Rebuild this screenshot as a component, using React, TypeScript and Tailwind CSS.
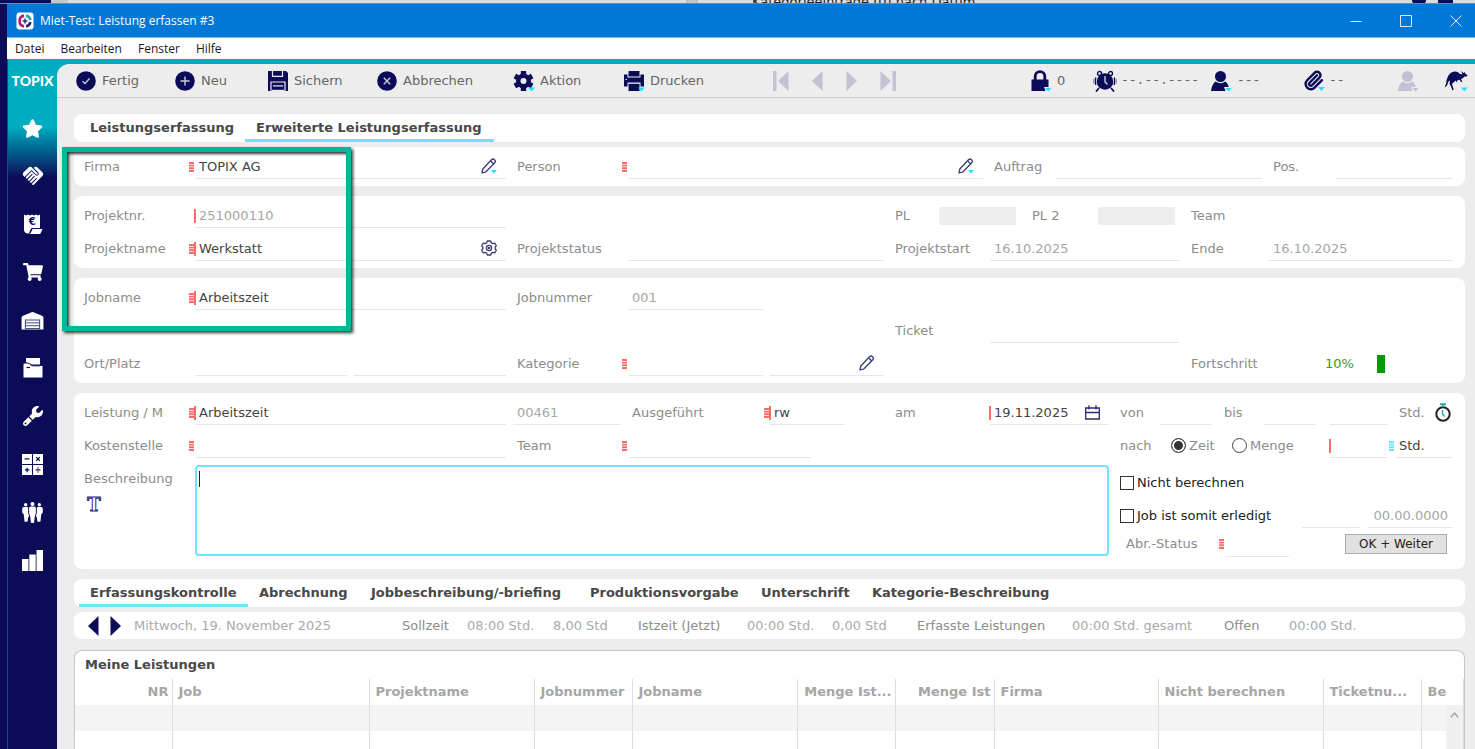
import type { ReactNode } from 'react';
import { Paperclip } from 'lucide-react';
import { FaShoppingCart, FaStar, FaWrench } from 'react-icons/fa';
import { MdHandshake } from 'react-icons/md';

/* ─── Types ─────────────────────────────────────────────────────────────── */

type Mark = 'list' | 'required' | 'both' | 'listCyan';

interface Tab {
  title: string;
  width: string;
}

interface Column {
  title: string;
  width: string;
  right?: boolean;
}

/* ─── Data ──────────────────────────────────────────────────────────────── */

const MENUS = ['Datei', 'Bearbeiten', 'Fenster', 'Hilfe'];

const MAIN_TABS: Tab[] = [
  { title: 'Leistungserfassung',            width: 'w-[166px]' },
  { title: 'Erweiterte Leistungserfassung', width: 'w-[249px]' },
];

const DETAIL_TABS: Tab[] = [
  { title: 'Erfassungskontrolle',       width: 'w-[169px]' },
  { title: 'Abrechnung',                width: 'w-[112px]' },
  { title: 'Jobbeschreibung/-briefing', width: 'w-[219px]' },
  { title: 'Produktionsvorgabe',        width: 'w-[171px]' },
  { title: 'Unterschrift',              width: 'w-[111px]' },
  { title: 'Kategorie-Beschreibung',    width: 'w-[200px]' },
];

const COLUMNS: Column[] = [
  { title: 'NR',              width: 'w-[97px]', right: true },
  { title: 'Job',             width: 'w-[197px]' },
  { title: 'Projektname',     width: 'w-[165px]' },
  { title: 'Jobnummer',       width: 'w-[98px]' },
  { title: 'Jobname',         width: 'w-[165px]' },
  { title: 'Menge Ist...',    width: 'w-[98px]', right: true },
  { title: 'Menge Ist',       width: 'w-[99px]', right: true },
  { title: 'Firma',           width: 'w-[164px]' },
  { title: 'Nicht berechnen', width: 'w-[165px]' },
  { title: 'Ticketnu...',     width: 'w-[98px]' },
  { title: 'Be',              width: 'w-auto' },
];

const SUMMARY = [
  { text: 'Mittwoch, 19. November 2025', style: 'w-[268px] text-[#aaaaaa]' },
  { text: 'Sollzeit',                    style: 'w-[65px] text-[#8c8c8c]' },
  { text: '08:00 Std.',                  style: 'w-[86px] text-[#aaaaaa]' },
  { text: '8,00 Std',                    style: 'w-[85px] text-[#aaaaaa]' },
  { text: 'Istzeit (Jetzt)',             style: 'w-[109px] text-[#8c8c8c]' },
  { text: '00:00 Std.',                  style: 'w-[85px] text-[#aaaaaa]' },
  { text: '0,00 Std',                    style: 'w-[85px] text-[#aaaaaa]' },
  { text: 'Erfasste Leistungen',         style: 'w-[155px] text-[#8c8c8c]' },
  { text: '00:00 Std. gesamt',           style: 'w-[152px] text-[#aaaaaa]' },
  { text: 'Offen',                       style: 'w-[65px] text-[#8c8c8c]' },
  { text: '00:00 Std.',                  style: 'text-[#aaaaaa]' },
];

/* ─── Page ──────────────────────────────────────────────────────────────── */

export default function App() {
  return (
    <div className="flex h-screen flex-col overflow-hidden bg-[#0c0b58] font-['DejaVu_Sans',sans-serif] text-[13px] leading-4 text-[#444444]">
      <BackgroundWindow />
      <div className="ml-[7px] flex min-h-0 flex-1 flex-col">
        <TitleBar />
        <nav className="flex h-[21px] shrink-0 items-center gap-4 bg-white pl-2 font-['Open_Sans',sans-serif] text-xs text-[#1a1a1a]">
          {MENUS.map(menu => (
            <button key={menu} type="button">{menu}</button>
          ))}
        </nav>
        <div className="flex min-h-0 flex-1 bg-[#00acc1]">
          <Sidebar />
          <div className="mt-[5px] flex min-w-0 flex-1 flex-col rounded-tl-xl bg-[#ededed]">
            <Toolbar />
            <EntryForm />
          </div>
        </div>
      </div>
    </div>
  );
}

/* ─── Window chrome ─────────────────────────────────────────────────────── */

// Sliver of the window that lies behind this one
function BackgroundWindow() {
  return (
    <div className="flex h-1 shrink-0 items-center overflow-hidden border-b border-[#5d8fb8] bg-[#dcdcdc] text-[#222222]">
      <span className="h-1 w-[51px] bg-[#0c0b58]" />
      <span className="h-1 w-[17px] bg-[#c8c8c8]" />
      <span className="ml-[618px] h-1 w-3 bg-[#c4c4c4]" />
      <span className="ml-[54px]">Kategorieeinträge (0) nach Datum</span>
      <span className="ml-auto h-1 w-[14px] rounded-b-full bg-[#0c0b58]" />
      <span className="ml-3 mr-[22px] h-1 w-[15px] bg-[#0c0b58]" />
    </div>
  );
}

function TitleBar() {
  return (
    <header className="flex h-[34px] shrink-0 items-center border-b border-[#7fbbeb] bg-[#0078d7] pl-[9px] pr-[13px] text-white">
      <svg viewBox="0 0 18 18" className="size-[18px]" aria-hidden="true">
        <rect x="0.5" y="0.5" width="17" height="17" rx="3" fill="#ffffff" />
        <path d="M8 3.6A5.5 5.5 0 0 0 8 14.4" fill="none" stroke="#b5196e" strokeWidth="2.6" />
        <path d="M10 3.6A5.5 5.5 0 0 1 14.4 8" fill="none" stroke="#19a9a0" strokeWidth="2.6" />
        <path d="M14.4 10A5.5 5.5 0 0 1 10 14.4" fill="none" stroke="#2a2470" strokeWidth="2.6" />
        <path d="M9 5.6 10 8l2.4 1-2.4 1-1 2.4L8 10 5.600 9 8 8z" fill="#3a3a8c" />
      </svg>
      <h1 className="ml-[6px] font-['Open_Sans',sans-serif] text-xs">Miet-Test: Leistung erfassen #3</h1>
      <div className="ml-auto flex gap-[38px]">
        <WindowButton name="Minimieren" path="M0.500 6.500H11.500" />
        <WindowButton name="Maximieren" path="M0.500 0.500H11.500V11.500H0.500Z" />
        <WindowButton name="Schließen" path="M0.500 0.500 11.500 11.500M11.500 0.500 0.500 11.500" />
      </div>
    </header>
  );
}

function WindowButton({ name, path }: { name: string; path: string }) {
  return (
    <button type="button" aria-label={name}>
      <svg viewBox="0 0 12 12" className="size-3" fill="none" stroke="#d9ebfa" strokeWidth="1">
        <path d={path} />
      </svg>
    </button>
  );
}

/* ─── Sidebar ───────────────────────────────────────────────────────────── */

function Sidebar() {
  return (
    <aside className="flex w-[50px] shrink-0 flex-col items-center border-l border-[#0f4c94] bg-linear-to-b from-[#00acc1] from-[68px] to-[#0c0b58] to-[118px] text-white">
      <span className="mt-[14px] font-['Lato',sans-serif] text-sm leading-4 font-black">TOPIX</span>
      <div className="mt-[15px] flex flex-col">
        <SideButton name="Favoriten"><FaStar className="size-[21px]" /></SideButton>
        <SideButton name="Kontakte"><MdHandshake className="size-6" /></SideButton>
        <SideButton name="Belege"><ReceiptIcon /></SideButton>
        <SideButton name="Einkauf"><FaShoppingCart className="size-5" /></SideButton>
        <SideButton name="Lager"><WarehouseIcon /></SideButton>
        <SideButton name="Ablage"><FolderIcon /></SideButton>
        <SideButton name="Service"><WrenchIcon /></SideButton>
        <SideButton name="Buchhaltung"><CalculatorIcon /></SideButton>
        <SideButton name="Personal"><PeopleIcon /></SideButton>
        <SideButton name="Auswertung"><BarsIcon /></SideButton>
      </div>
    </aside>
  );
}

function SideButton({ name, children }: { name: string; children: ReactNode }) {
  return (
    <button type="button" aria-label={name} className="flex h-12 w-full items-center justify-center">
      {children}
    </button>
  );
}

function ReceiptIcon() {
  return (
    <svg viewBox="0 0 20 20" className="size-5">
      <path d="M1 0.500 3 1.500 5 .5 7 1.500 9 .5 11 1.500 13 .5 15 1.500 17 .5V14H9Q8 14 7.500 15.500L6 19.500H4.500Q1 19 1 15.500Z" fill="#ffffff" />
      <path d="M9.500 15H19.500L18 18.500Q17.500 20 16 20H6.500Q8 19.500 8.600 17Z" fill="#ffffff" />
      <text x="9.300" y="11" textAnchor="middle" fontSize="10" fontWeight="bold" fill="#0c0b58">€</text>
    </svg>
  );
}

function WarehouseIcon() {
  return (
    <svg viewBox="0 0 24 20" className="h-[19px] w-[23px]">
      <path d="M0.500 19.500V7Q.5 5.500 2 5L11 1.200Q12 .8 13 1.200L22 5Q23.500 5.500 23.500 7V19.500Z" fill="#ffffff" />
      <path d="M4.500 9.500H19.500M4.500 12.500H19.500M4.500 15.500H19.500M4.500 18.500H19.500M4.500 9V19.500M19.500 9V19.500" stroke="#3a3978" strokeWidth="1" />
    </svg>
  );
}

function FolderIcon() {
  return (
    <svg viewBox="0 0 20 20" className="size-5">
      <path d="M3 0H17V6.500H10Q8 6.500 7 5.500T4 4.500H3Z" fill="#ffffff" />
      <path d="M.5 6.500Q.5 5.500 1.500 5.500H4Q6 5.500 7 6.500T10 8H19.500V19.500H.5Z" fill="#ffffff" />
      <path d="M17 6.500V8H10Q8 8 7 6.500" fill="none" stroke="#3a3978" strokeWidth="0.800" />
      <path d="M3.500 9.500H7" stroke="#0c0b58" strokeWidth="1.200" />
    </svg>
  );
}

function WrenchIcon() {
  return (
    <svg viewBox="0 0 20 20" className="size-5">
      <FaWrench width="20" height="20" size="20" />
      <path d="M4.500 9.500 10.500 15.500" stroke="#0c0b58" strokeWidth="1.300" />
    </svg>
  );
}

function CalculatorIcon() {
  return (
    <svg viewBox="0 0 20 20" className="size-[21px]">
      <path d="M0 0H9.500V9.500H0ZM10.500 0H20V9.500H10.500ZM0 10.500H9.500V20H0ZM10.500 10.500H20V20H10.500Z" fill="#ffffff" />
      <path
        d="M2.500 4.700H7M13.500 3 17 6.500M17 3 13.500 6.500M2.700 15.200H7M4.850 13V17.400M13 15.200H17.500"
        stroke="#0c0b58"
        strokeWidth="1.200"
      />
      <path d="M14.700 12.700H15.900V13.900H14.700ZM14.700 16.500H15.900V17.700H14.700Z" fill="#0c0b58" />
    </svg>
  );
}

function PeopleIcon() {
  return (
    <svg viewBox="0 0 20 20" className="size-[21px]" fill="#ffffff">
      <circle cx="10" cy="1.900" r="1.900" />
      <circle cx="3.500" cy="2.600" r="1.600" />
      <circle cx="16.500" cy="2.600" r="1.600" />
      <path d="M8 4.300H12Q13.200 4.300 13.200 6V11L12.300 13 11.500 19.500Q10 20.500 8.500 19.500L7.700 13 6.800 11V6Q6.800 4.300 8 4.300Z" />
      <path d="M1.500 4.700H5.200L5.900 5.500V11L7 13.500 6 14 5.300 18.500Q3.700 19.300 2.400 18.500L1.700 12 .2 10V6.500Q.2 4.900 1.500 4.700Z" />
      <path d="M18.500 4.700H14.800L14.100 5.500V11L13 13.500 14 14 14.700 18.500Q16.300 19.300 17.600 18.500L18.300 12 19.800 10V6.500Q19.800 4.900 18.500 4.700Z" />
    </svg>
  );
}

function BarsIcon() {
  return (
    <svg viewBox="0 0 21 21" className="size-[21px]" fill="#ffffff">
      <path d="M0 9H6.500V21H0ZM7.300 4.500H13.700V21H7.300ZM14.500 0H21V21H14.500Z" />
    </svg>
  );
}

/* ─── Toolbar ───────────────────────────────────────────────────────────── */

function Toolbar() {
  return (
    <div className="flex h-[34px] shrink-0 items-center rounded-tl-xl border-b border-[#cfcfcf] pl-[17px] text-[#666666]">
      <ToolButton label="Fertig" width="w-[99px]"><CircleIcon path="M7.500 11.200 10 13.500 14.500 8.500" /></ToolButton>
      <ToolButton label="Neu" width="w-[93px]"><CircleIcon path="M11 6.500V15.500M6.500 11H15.500" /></ToolButton>
      <ToolButton label="Sichern" width="w-[109px]"><SaveIcon /></ToolButton>
      <ToolButton label="Abbrechen" width="w-[137px]"><CircleIcon path="M7.800 7.800 14.200 14.200M14.200 7.800 7.800 14.200" /></ToolButton>
      <ToolButton label="Aktion" width="w-[110px]"><GearIcon /></ToolButton>
      <ToolButton label="Drucken" width="w-[151px]"><PrinterIcon /></ToolButton>

      <div className="flex items-center gap-[23px] text-[#c3c1d3]">
        <NavButton name="Erster" width="w-4" box="0 0 16 20" path="M0 0H3.500V20H0ZM15.500 0V20L5 10Z" />
        <NavButton name="Zurück" width="w-[11px]" box="0 0 11 20" path="M10.500 0V20L0 10Z" />
        <NavButton name="Weiter" width="w-[11px]" box="0 0 11 20" path="M.5 0V20L11 10Z" />
        <NavButton name="Letzter" width="w-4" box="0 0 16 20" path="M12.500 0H16V20H12.500ZM.5 0V20L11 10Z" />
      </div>

      <div className="ml-auto flex pr-[7px]">
        <ToolButton label="0" name="Sperre" width="w-[64px]"><LockIcon /></ToolButton>
        <ToolButton label="--.--.----" name="Wiedervorlage" mono width="w-[116px]"><AlarmIcon /></ToolButton>
        <ToolButton label="---" name="Mitarbeiter" mono width="w-[92px]"><PersonIcon color="#0c0b58" caret="#1fe0ff" /></ToolButton>
        <ToolButton label="--" name="Anhänge" mono width="w-[95px]">
          <span className="relative flex">
            <Paperclip className="size-[21px]" stroke="#0c0b58" strokeWidth={2.8} />
            <Caret />
          </span>
        </ToolButton>
        <ToolButton name="Benutzer" width="w-[48px]"><PersonIcon color="#c3c1d3" caret="#c3c1d3" /></ToolButton>
        <ToolButton name="Känguru" width="w-6"><KangarooIcon /></ToolButton>
      </div>
    </div>
  );
}

function ToolButton({
  label, name, width, mono, children,
}: {
  label?: string;
  name?: string;
  width: string;
  mono?: boolean;
  children: ReactNode;
}) {
  return (
    <button type="button" aria-label={name} className={`flex shrink-0 items-center gap-1 ${width}`}>
      <span className="flex w-6 shrink-0 justify-center">{children}</span>
      {label && <span className={mono ? "font-['Liberation_Mono',monospace]" : ''}>{label}</span>}
    </button>
  );
}

function NavButton({ name, width, box, path }: { name: string; width: string; box: string; path: string }) {
  return (
    <button type="button" aria-label={name}>
      <svg viewBox={box} className={`h-5 ${width}`} fill="currentColor"><path d={path} /></svg>
    </button>
  );
}

function Caret() {
  return (
    <svg viewBox="0 0 7 4" className="absolute -right-px bottom-0 h-1 w-[7px]">
      <path d="M0 0H7L3.500 4Z" fill="#1fe0ff" />
    </svg>
  );
}

function CircleIcon({ path }: { path: string }) {
  return (
    <svg viewBox="0 0 22 22" className="size-[22px]">
      <circle cx="11" cy="11" r="9.800" fill="#0c0b58" />
      <path d={path} fill="none" stroke="#c9c9dc" strokeWidth="1.400" />
    </svg>
  );
}

function SaveIcon() {
  return (
    <svg viewBox="0 0 20 20" className="size-5">
      <path d="M0 0H18L20 2V20H0Z" fill="#0c0b58" />
      <path d="M4.500 0V5.300H14.500V0" fill="none" stroke="#ededed" strokeWidth="1.200" />
      <path d="M3 20V11H17V20" fill="none" stroke="#ededed" strokeWidth="1.200" />
      <path d="M5 14.300H15V15.500H5Z" fill="#ededed" />
      <path d="M4 18.800H16V20H4Z" fill="#ededed" />
    </svg>
  );
}

function GearIcon() {
  return (
    <svg viewBox="0 0 22 22" className="size-[22px]" fill="#0c0b58">
      <circle cx="10.500" cy="11" r="7.500" />
      <rect x="7.800" y="1" width="5.400" height="20" rx="0.500" />
      <rect x="7.800" y="1" width="5.400" height="20" rx="0.500" transform="rotate(60 10.500 11)" />
      <rect x="7.800" y="1" width="5.400" height="20" rx="0.500" transform="rotate(120 10.500 11)" />
      <circle cx="10.500" cy="11" r="3" fill="#ededed" />
      <path d="M15 17.500H22L18.500 21.500Z" fill="#1fe0ff" />
    </svg>
  );
}

function PrinterIcon() {
  return (
    <svg viewBox="0 0 22 22" className="size-[22px]" fill="#0c0b58">
      <path d="M5.500 1H16.500V6.500H5.500Z" />
      <path d="M1 4.500H4.500V7.500H17.500V4.500H20.500Q21 4.500 21 5.500V16.500H17.500V12.500H4.500V16.500H1Z" />
      <path d="M5.500 13.800H16.500V21H5.500Z" />
      <path d="M2.500 9.500H4" stroke="#ededed" />
      <path d="M15 17.500H22L18.500 21.500Z" fill="#1fe0ff" />
    </svg>
  );
}

function LockIcon() {
  return (
    <svg viewBox="0 0 22 22" className="size-[22px]">
      <path d="M5.200 10V6.500A4.800 4.800 0 0 1 14.800 6.500V10" fill="none" stroke="#0c0b58" strokeWidth="2.800" />
      <path d="M1.500 9.500H18.500V17H14L15.500 21H1.500Z" fill="#0c0b58" />
      <path d="M15 18H21.500L18.300 21.500Z" fill="#1fe0ff" />
    </svg>
  );
}

function AlarmIcon() {
  return (
    <svg viewBox="0 0 24 22" className="h-[22px] w-6">
      <circle cx="12" cy="11.500" r="8.300" fill="#0c0b58" />
      <path d="M6 18 3 21.500M18 18 21 21.500" stroke="#0c0b58" strokeWidth="1.800" />
      <circle cx="6.500" cy="3.500" r="2" fill="none" stroke="#0c0b58" strokeWidth="1.300" />
      <circle cx="17.500" cy="3.500" r="2" fill="none" stroke="#0c0b58" strokeWidth="1.300" />
      <path d="M2.800 7.500Q1.800 11 2.800 15M21.200 7.500Q22.200 11 21.200 15" fill="none" stroke="#0c0b58" strokeWidth="1.300" />
      <path d="M1 8.500Q.2 11 1 14M23 8.500Q23.800 11 23 14" fill="none" stroke="#8886ab" strokeWidth="1" />
      <path d="M12 6V12L14.500 14.500" fill="none" stroke="#dddde8" strokeWidth="1.300" />
    </svg>
  );
}

function PersonIcon({ color, caret }: { color: string; caret: string }) {
  return (
    <svg viewBox="0 0 22 22" className="size-[22px]">
      <circle cx="10.500" cy="6.500" r="5.500" fill={color} />
      <path d="M1 21Q2 14 5.500 11.500Q10.500 15 15.500 11.500Q18 13.500 18.800 17H14L15.500 21Z" fill={color} />
      <path d="M15.500 18H21.500L18.500 21.500Z" fill={caret} />
    </svg>
  );
}

function KangarooIcon() {
  return (
    <svg viewBox="0 0 24 22" className="h-[22px] w-6">
      <path
        d="M.8 15.800 2 14.500Q2 10 4 6.200Q6.500 2 10.500 1.600Q14 1.500 16 4L18.500 4.300 17 1 20 3.200 20.500 1.800 21.500 3.700 23.500 5.200 22.800 6.500 20.500 6.600 18.500 8.500 17 9 18.300 11.800 17.300 12.300 15.500 9.800 13.500 10.200 12.500 12.500 11.800 10.500 9.500 12.500 8 14 8.500 16 9.800 19.500 8.300 20.200 7 16.500 5.500 14 6 10.500 4.500 11.500 3.300 15 1.300 17.300Z"
        fill="#0c0b58"
      />
      <path d="M17 17.500H23.500L20.300 21.500Z" fill="#1fe0ff" />
    </svg>
  );
}

/* ─── Form ──────────────────────────────────────────────────────────────── */

function EntryForm() {
  return (
    <main className="relative flex min-h-0 flex-1 flex-col pl-[17px] pr-[10px] pt-4">
      <TabBar tabs={MAIN_TABS} active={1} />

      {/* Firma */}
      <Card className="mt-[5px]">
        <div className="grid grid-cols-[422fr_477fr_279fr_191fr]">
          <Group first>
            <Label id="firma" width="w-[111px]">Firma</Label>
            <Field id="firma" value="TOPIX AG" mark="list"><PencilIcon caret /></Field>
          </Group>
          <Group>
            <Label id="person" width="w-[111px]">Person</Label>
            <Field id="person" mark="list"><PencilIcon caret /></Field>
          </Group>
          <Group>
            <Label id="auftrag" width="w-[62px]">Auftrag</Label>
            <Field id="auftrag" />
          </Group>
          <Group>
            <Label id="pos" width="w-[62px]">Pos.</Label>
            <Field id="pos" />
          </Group>
        </div>
      </Card>

      {/* Projekt */}
      <Card className="mt-[10px]">
        <div className="grid grid-cols-[422fr_378fr_296fr_273fr]">
          <Group first>
            <Label id="projektnr" width="w-[111px]">Projektnr.</Label>
            <Field id="projektnr" value="251000110" mark="required" muted />
          </Group>
          <Group />
          <Group>
            <Label id="pl" width="w-[44px]">PL</Label>
            <input id="pl" readOnly className="mr-4 h-[18px] w-[77px] bg-[#eeeeee]" />
            <Label id="pl2" width="w-[66px]">PL 2</Label>
            <input id="pl2" readOnly className="h-[18px] w-[77px] bg-[#eeeeee]" />
          </Group>
          <Group><span className="text-[#8c8c8c]">Team</span></Group>

          <Group first>
            <Label id="projektname" width="w-[111px]">Projektname</Label>
            <Field id="projektname" value="Werkstatt" mark="both"><SettingsIcon /></Field>
          </Group>
          <Group>
            <Label id="status" width="w-[111px]">Projektstatus</Label>
            <Field id="status" />
          </Group>
          <Group>
            <Label id="start" width="w-[95px]">Projektstart</Label>
            <Field id="start" value="16.10.2025" muted />
          </Group>
          <Group>
            <Label id="ende" width="w-[78px]">Ende</Label>
            <Field id="ende" value="16.10.2025" muted />
          </Group>
        </div>
      </Card>

      {/* Job */}
      <Card className="mt-[10px]">
        <div className="grid grid-cols-[422fr_378fr_296fr_273fr]">
          <Group first>
            <Label id="jobname" width="w-[111px]">Jobname</Label>
            <Field id="jobname" value="Arbeitszeit" mark="both" />
          </Group>
          <Group>
            <Label id="jobnummer" width="w-[111px]">Jobnummer</Label>
            <Field id="jobnummer" value="001" muted width="w-[135px]" />
          </Group>
          <Group />
          <Group />

          <Group first />
          <Group />
          <Group>
            <Label id="ticket" width="w-[95px]">Ticket</Label>
            <Field id="ticket" />
          </Group>
          <Group />

          <Group first>
            <Label id="ort" width="w-[111px]">Ort/Platz</Label>
            <Field id="ort" />
            <span className="w-[7px]" />
            <Field name="Platz" />
          </Group>
          <Group>
            <Label id="kategorie" width="w-[111px]">Kategorie</Label>
            <Field id="kategorie" mark="list" width="w-[135px]" />
            <span className="w-[7px]" />
            <Field name="Unterkategorie"><PencilIcon /></Field>
          </Group>
          <Group />
          <Group>
            <span className="w-[134px] text-[#8c8c8c]">Fortschritt</span>
            <span className="w-[52px] text-[#2f9c1f]">10%</span>
            <span className="h-[18px] w-2 bg-[#009a00]" />
          </Group>
        </div>
      </Card>

      {/* Leistung */}
      <Card className="mt-[10px]">
        <div className="grid grid-cols-[422fr_378fr_225fr_344fr]">
          <Group first>
            <Label id="leistung" width="w-[111px]">Leistung / M</Label>
            <Field id="leistung" value="Arbeitszeit" mark="both" />
          </Group>
          <div className="flex h-[33px] min-w-0 items-center pl-[7px]">
            <Field name="Leistungsnummer" value="00461" muted width="w-[108px]" />
            <span className="w-[11px]" />
            <Label id="ausgefuehrt" width="w-[138px]">Ausgeführt</Label>
            <Field id="ausgefuehrt" value="rw" mark="both" width="w-[75px]" />
          </div>
          <Group>
            <Label id="am" width="w-[95px]">am</Label>
            <Field id="am" value="19.11.2025" mark="required"><CalendarIcon /></Field>
          </Group>
          <Group>
            <Label id="von" width="w-10">von</Label>
            <Field id="von" width="w-[52px]" />
            <span className="w-3" />
            <Label id="bis" width="w-10">bis</Label>
            <Field id="bis" width="w-[52px]" />
            <span className="ml-auto" />
            <Field name="Dauer" width="w-[58px]" />
            <span className="ml-[11px] w-9 text-[#8c8c8c]">Std.</span>
            <button type="button" aria-label="Stoppuhr" className="mr-[2px]"><StopwatchIcon /></button>
          </Group>

          <Group first>
            <Label id="kostenstelle" width="w-[111px]">Kostenstelle</Label>
            <Field id="kostenstelle" mark="list" />
          </Group>
          <Group>
            <Label id="team" width="w-[111px]">Team</Label>
            <Field id="team" mark="list" width="w-[184px]" />
          </Group>
          <Group />
          <Group>
            <span className="w-[51px] text-[#8c8c8c]">nach</span>
            <Radio label="Zeit" width="w-[61px]" checked />
            <Radio label="Menge" width="w-[65px]" />
            <span className="ml-auto" />
            <Field name="Menge" mark="required" width="w-[58px]" />
            <span className="w-[7px]" />
            <Field name="Einheit" value="Std." mark="listCyan" width="w-[58px]" />
          </Group>

          <div className="col-span-3 flex pb-[10px]">
            <div className="w-[111px] shrink-0 pt-[9px]">
              <label htmlFor="beschreibung" className="text-[#8c8c8c]">Beschreibung</label>
              <button type="button" aria-label="Textbaustein" className="mt-2 block">
                <svg viewBox="0 0 20 18" className="h-[18px] w-5">
                  <text x="10" y="15.500" textAnchor="middle" fontSize="18" fontWeight="bold" fill="#ffffff" stroke="#2b2a6c" strokeWidth="1" fontFamily="DejaVu Serif, serif">T</text>
                </svg>
              </button>
            </div>
            <div className="relative mt-[3px] flex-1">
              <textarea
                id="beschreibung"
                className="block h-[91px] w-full resize-none rounded-[4px] border-2 border-[#6ce5fa] bg-white px-1 py-1 outline-none"
              />
              <span className="absolute left-1 top-[6px] h-4 w-px bg-[#222222]" />
            </div>
          </div>
          <div className="pl-[11px] pt-1">
            <div className="flex h-[33px] items-center">
              <Check label="Nicht berechnen" />
            </div>
            <div className="flex h-[33px] items-center">
              <Check label="Job ist somit erledigt" />
              <span className="ml-auto" />
              <Field name="Erledigt von" width="w-[58px]" />
              <span className="w-2" />
              <Field name="Erledigt am" value="00.00.0000" muted right width="w-[85px]" />
            </div>
            <div className="flex h-6 items-center pl-[6px]">
              <Label id="abr" width="w-[99px]">Abr.-Status</Label>
              <Field id="abr" mark="list" width="w-[64px]" />
              <button
                type="button"
                className="ml-auto mr-[6px] h-5 w-[102px] border border-[#adadad] bg-[#e1e1e1] text-xs text-[#222222]"
              >
                OK + Weiter
              </button>
            </div>
          </div>
        </div>
      </Card>

      <div className="mt-[10px]">
        <TabBar tabs={DETAIL_TABS} active={0} />
      </div>

      <div className="mt-[5px] flex h-[27px] shrink-0 items-center whitespace-nowrap rounded-lg bg-white pl-[14px]">
        <span className="flex w-[46px] gap-[11px] text-[#0c0b58]">
          <NavButton name="Vorheriger Tag" width="w-[11px]" box="0 0 11 20" path="M10.500 0V20L0 10Z" />
          <NavButton name="Nächster Tag" width="w-[11px]" box="0 0 11 20" path="M.5 0V20L11 10Z" />
        </span>
        {SUMMARY.map((cell, i) => (
          <span key={i} className={cell.style}>{cell.text}</span>
        ))}
      </div>

      <EntriesTable />

      {/* Callout frame round the customer and job data */}
      <div className="pointer-events-none absolute left-[5px] top-[49px] h-[184px] w-[289px] border-[5px] border-[#00b899] shadow-[2px_2px_3px_rgba(0,0,0,0.8),inset_2px_2px_3px_rgba(0,0,0,0.8)]" />
    </main>
  );
}

function TabBar({ tabs, active }: { tabs: Tab[]; active: number }) {
  return (
    <div className="flex h-7 shrink-0 rounded-lg bg-white pl-[5px] font-bold text-[#484848]">
      {tabs.map((tab, i) => (
        <button
          key={tab.title}
          type="button"
          className={`shrink-0 whitespace-nowrap border-b-3 pl-[11px] pt-[2px] text-left ${tab.width} ${i === active ? 'border-[#6ce5fa]' : 'border-transparent'}`}
        >
          {tab.title}
        </button>
      ))}
    </div>
  );
}

function Card({ className, children }: { className: string; children: ReactNode }) {
  return <section className={`shrink-0 rounded-lg bg-white py-[3px] pl-[10px] pr-3 ${className}`}>{children}</section>;
}

function Group({ first, children }: { first?: boolean; children?: ReactNode }) {
  return <div className={`flex h-[33px] min-w-0 items-center ${first ? '' : 'pl-[11px]'}`}>{children}</div>;
}

function Label({ id, width, children }: { id: string; width: string; children: ReactNode }) {
  return <label htmlFor={id} className={`shrink-0 text-[#8c8c8c] ${width}`}>{children}</label>;
}

function Field({
  id, name, value, mark, muted, right, width, children,
}: {
  id?: string;
  name?: string;
  value?: string;
  mark?: Mark;
  muted?: boolean;
  right?: boolean;
  width?: string;
  children?: ReactNode;
}) {
  return (
    <div className={`flex h-[25px] items-center ${width ? `shrink-0 ${width}` : 'min-w-0 flex-1'}`}>
      {mark && <MarkIcon mark={mark} />}
      <div className="flex h-full min-w-0 flex-1 items-center border-b border-[#e6e6e6]">
        <input
          id={id}
          aria-label={name}
          defaultValue={value}
          className={`h-full w-full min-w-0 flex-1 bg-transparent pl-1 outline-none ${muted ? 'text-[#a6a6a6]' : 'text-[#444444]'} ${right ? 'pr-[5px] text-right' : ''}`}
        />
        {children && <span className="mr-[9px] flex shrink-0">{children}</span>}
      </div>
    </div>
  );
}

// Stripes: value list available. Bar: field is required.
function MarkIcon({ mark }: { mark: Mark }) {
  const stripes = mark !== 'required';
  const bar = mark === 'required' || mark === 'both';
  return (
    <svg
      viewBox="0 0 7 14"
      className="-ml-[6px] -mr-px h-[14px] w-[7px] shrink-0"
      fill={mark === 'listCyan' ? '#6ce5fa' : '#ff6b6b'}
    >
      {stripes && <path d="M0 2H5V4H0ZM0 4.700H5V6.500H0ZM0 7.300H5V9.200H0ZM0 10H5V12H0Z" />}
      {bar && <path d="M5 0H7V14H5Z" />}
    </svg>
  );
}

function Radio({ label, width, checked }: { label: string; width: string; checked?: boolean }) {
  return (
    <label className={`flex items-center gap-[3px] text-[#8c8c8c] ${width}`}>
      <input
        type="radio"
        name="abrechnungsart"
        defaultChecked={checked}
        className="size-[15px] shrink-0 appearance-none rounded-full border border-[#444444] bg-white checked:bg-[#333333] checked:shadow-[inset_0_0_0_2px_#ffffff]"
      />
      {label}
    </label>
  );
}

function Check({ label }: { label: string }) {
  return (
    <label className="flex items-center gap-[3px] whitespace-nowrap text-[#222222]">
      <input type="checkbox" className="size-[14px] shrink-0 appearance-none border border-[#333333] bg-white checked:bg-[#333333]" />
      {label}
    </label>
  );
}

/* ─── Field icons ───────────────────────────────────────────────────────── */

function PencilIcon({ caret }: { caret?: boolean }) {
  return (
    <svg viewBox="0 0 16 16" className="size-4" fill="none" stroke="#3b3a7c" strokeWidth="1.300" strokeLinejoin="round">
      <path d="M1 15 1.800 11 10.500 1.800Q12 .3 13.500 1.700T13.800 4.800L5 13.800Z" />
      <path d="M9.500 2.800 12.800 6" />
      {caret && <path d="M10 12H15.800L13 15.500Z" fill="#1fe0ff" stroke="none" />}
    </svg>
  );
}

function SettingsIcon() {
  return (
    <svg viewBox="0 0 16 16" className="size-4" fill="none" stroke="#3b3a7c" strokeWidth="1.300" strokeLinejoin="round">
      <path d="M6.300 1H9.700L10.300 2.800 12 3.600 13.900 3.200 15.300 5.800 14.200 7.200V8.800L15.300 10.200 13.900 12.800 12 12.400 10.300 13.200 9.700 15H6.300L5.700 13.200 4 12.400 2.100 12.800.7 10.200 1.800 8.800V7.200L.7 5.800 2.100 3.200 4 3.600 5.700 2.800Z" />
      <circle cx="8" cy="8" r="2.600" />
      <circle cx="8" cy="8" r="0.600" />
    </svg>
  );
}

function CalendarIcon() {
  return (
    <svg viewBox="0 0 15 15" className="size-[15px]" fill="none" stroke="#2b2a6c" strokeWidth="1.300">
      <path d="M.7 3H14.300V14H.7ZM.7 7.500H14.300M4 .3V4.500M11 .3V4.500" />
    </svg>
  );
}

function StopwatchIcon() {
  return (
    <svg viewBox="0 0 16 19" className="h-[19px] w-4" fill="none">
      <circle cx="8" cy="11" r="6.700" stroke="#222222" strokeWidth="2" />
      <path d="M5 1.200H11M8 1V4" stroke="#27a9b8" strokeWidth="2" />
      <path d="M7.500 7V11L9.800 13.500" stroke="#27a9b8" strokeWidth="1.500" />
    </svg>
  );
}

/* ─── Table ─────────────────────────────────────────────────────────────── */

function EntriesTable() {
  return (
    <section className="relative mt-[11px] min-h-0 flex-1 overflow-hidden rounded-t-lg border border-b-0 border-[#c6c6c6] bg-white">
      <h2 className="pl-[10px] pt-[6px] font-bold text-[#484848]">Meine Leistungen</h2>
      <table className="mt-[6px] w-full table-fixed border-collapse">
        <thead>
          <tr className="h-[26px] text-[#a6a6a6]">
            {COLUMNS.map(col => (
              <th
                key={col.title}
                scope="col"
                className={`overflow-hidden whitespace-nowrap border-r border-[#dedede] p-0 ${col.width} ${col.right ? 'pr-[3px] text-right' : 'pl-[6px] text-left'}`}
              >
                {col.title}
              </th>
            ))}
          </tr>
        </thead>
        <tbody>
          {[0, 1, 2].map(row => (
            <tr key={row} className="h-[26px] odd:bg-[#f4f4f4]">
              {COLUMNS.map(col => (
                <td key={col.title} className="border-r border-[#dedede]" />
              ))}
            </tr>
          ))}
        </tbody>
      </table>
      <div className="absolute bottom-0 right-px top-[54px] flex w-[17px] justify-center bg-[#f0f0f0] pt-[7px]">
        <svg viewBox="0 0 9 6" className="h-[6px] w-[9px]" fill="none" stroke="#a6a6a6" strokeWidth="1.500">
          <path d="M.8 5.200 4.500 1.200 8.200 5.200" />
        </svg>
      </div>
    </section>
  );
}
